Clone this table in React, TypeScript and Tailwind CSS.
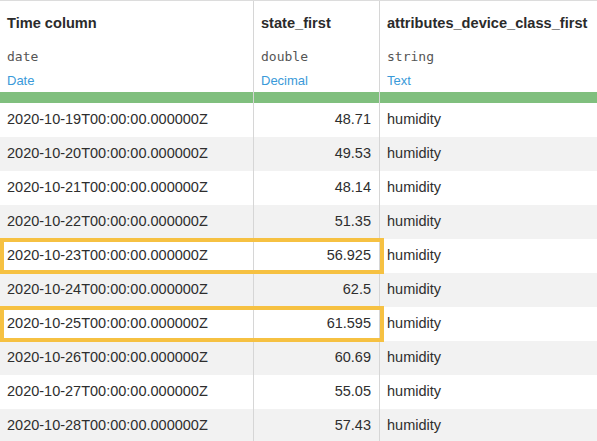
import React from 'react';

const rows = [
    { date: '2020-10-19T00:00:00.000000Z', value: '48.71' },
    { date: '2020-10-20T00:00:00.000000Z', value: '49.53' },
    { date: '2020-10-21T00:00:00.000000Z', value: '48.14' },
    { date: '2020-10-22T00:00:00.000000Z', value: '51.35' },
    { date: '2020-10-23T00:00:00.000000Z', value: '56.925', marked: true },
    { date: '2020-10-24T00:00:00.000000Z', value: '62.5' },
    { date: '2020-10-25T00:00:00.000000Z', value: '61.595', marked: true },
    { date: '2020-10-26T00:00:00.000000Z', value: '60.69' },
    { date: '2020-10-27T00:00:00.000000Z', value: '55.05' },
    { date: '2020-10-28T00:00:00.000000Z', value: '57.43' },
];

const columns = [
    { name: 'Time column', type: 'date', meaning: 'Date' },
    { name: 'state_first', type: 'double', meaning: 'Decimal' },
    { name: 'attributes_device_class_first', type: 'string', meaning: 'Text' },
];

export default function App() {
    return (
        <div className="w-[597px] h-[441px] overflow-hidden bg-white text-[#2e2e2e] font-['Liberation_Sans',Arial,sans-serif] border-t border-[#dcdcdc]">
            <div className="grid grid-cols-[254px_126px_1fr]">
                {columns.map((c, i) => (
                    <div key={c.name} className={`h-[91px] px-[7px] pt-[12px] ${i < 2 ? 'border-r border-[#d6d6d6]' : ''}`}>
                        <div className="text-[14.6px] font-bold leading-[20px] text-[#2b2b2b]">{c.name}</div>
                        <div className="mt-[15px] text-[13px] leading-[18px] text-[#555] font-['DejaVu_Sans_Mono',monospace]">{c.type}</div>
                        <div className="mt-[6px] text-[13px] leading-[18px] text-[#3a9ad9]">{c.meaning}</div>
                    </div>
                ))}
                {columns.map((c, i) => (
                    <div key={c.name + '-bar'} className={`h-[11px] bg-[#80bf7e] ${i < 2 ? 'border-r border-[#d6d6d6]' : ''}`} />
                ))}
            </div>
            {rows.map((r, idx) => (
                <div key={r.date} className={`grid grid-cols-[254px_126px_1fr] h-[34px] text-[14.5px] ${idx % 2 === 1 ? 'bg-[#f2f2f2]' : 'bg-white'}`}>
                    <div className="relative flex items-center px-[7px] border-r border-[#d6d6d6]">
                        {r.marked && (
                            <div className="absolute left-0 top-[-1px] bottom-[-1px] w-[384px] border-4 border-[#f6c142] z-10 pointer-events-none" />
                        )}
                        {r.date}
                    </div>
                    <div className="flex items-center justify-end px-[8px] border-r border-[#d6d6d6]">{r.value}</div>
                    <div className="flex items-center px-[7px]">humidity</div>
                </div>
            ))}
        </div>
    );
}
